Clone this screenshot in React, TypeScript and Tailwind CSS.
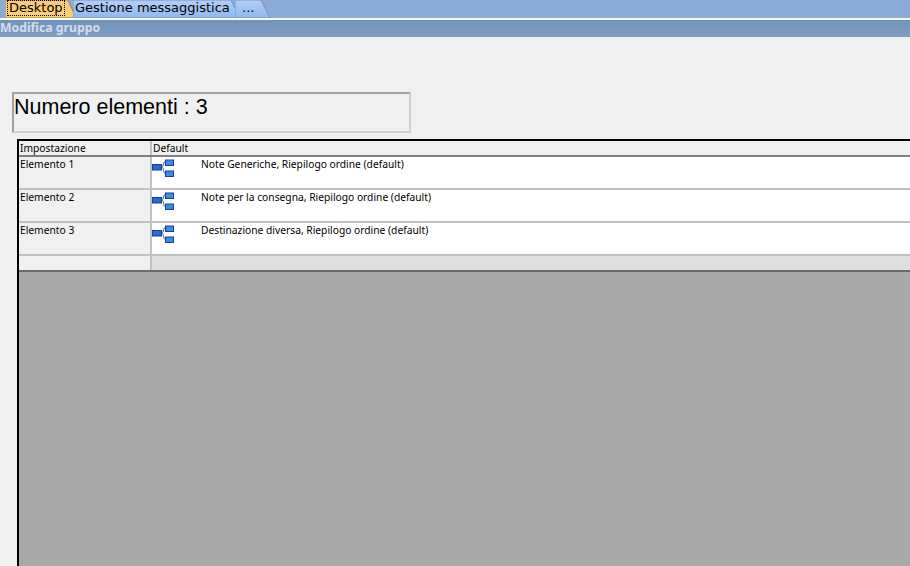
import React from 'react';

const rows = [
  { name: 'Elemento 1', value: 'Note Generiche, Riepilogo ordine (default)' },
  { name: 'Elemento 2', value: 'Note per la consegna, Riepilogo ordine (default)' },
  { name: 'Elemento 3', value: 'Destinazione diversa, Riepilogo ordine (default)' },
];

const TreeIcon: React.FC = () => (
  <svg width="23" height="20" viewBox="0 0 23 20" className="block">
    <path d="M10 8.5 C12.5 8.5 10.5 3.5 13.5 3.5 M10 9.5 C12.5 9.5 10.5 15.5 13.5 15.5" fill="none" stroke="#3b5a8c" strokeWidth="1" />
    <rect x="0.5" y="6.5" width="9" height="5.5" fill="#2a6ad0" stroke="#17408f" />
    <rect x="13.5" y="2" width="8" height="5.5" fill="#3a8ae6" stroke="#17408f" />
    <rect x="13.5" y="13" width="8" height="5.5" fill="#3a8ae6" stroke="#17408f" />
  </svg>
);

const App: React.FC = () => {
  return (
    <div className="h-[566px] w-[910px] overflow-hidden bg-[#f0f0f0] font-['Noto_Sans',sans-serif] text-black">
      {/* Tabs */}
      <div className="flex h-[18px] items-stretch bg-[#8aaad8] pl-[5px] font-['DejaVu_Sans',sans-serif] text-[13px] leading-[16px]">
        <div className="relative w-[72px]">
          <svg width="72" height="18" viewBox="0 0 72 18" className="absolute inset-0">
            <defs>
              <linearGradient id="active" x1="0" y1="0" x2="0" y2="1">
                <stop offset="0" stopColor="#f9c77e" />
                <stop offset="1" stopColor="#fcd06f" />
              </linearGradient>
              <linearGradient id="idle" x1="0" y1="0" x2="0" y2="1">
                <stop offset="0" stopColor="#b4cff5" />
                <stop offset="1" stopColor="#8fb8ee" />
              </linearGradient>
            </defs>
            <path d="M0 18V0H63L71 18Z" fill="url(#active)" stroke="#8f7f60" strokeWidth="1" />
          </svg>
          <span className="absolute left-[2px] top-0 border border-dotted border-black px-[1px] leading-[14px]">Desktop</span>
        </div>
        <div className="relative -ml-[4px] w-[168px]">
          <svg width="168" height="18" viewBox="0 0 168 18" className="absolute inset-0">
            <path d="M0 18V0H158L167 18Z" fill="url(#idle)" stroke="#6f93c8" strokeWidth="1" />
          </svg>
          <span className="absolute left-[2px] top-0 whitespace-nowrap">Gestione messaggistica</span>
        </div>
        <div className="relative -ml-[6px] w-[36px]">
          <svg width="36" height="18" viewBox="0 0 36 18" className="absolute inset-0">
            <path d="M0 18V0H26L35 18Z" fill="url(#idle)" stroke="#6f93c8" strokeWidth="1" />
          </svg>
          <span className="absolute left-[7px] top-0">...</span>
        </div>
      </div>
      <div className="h-[2px] bg-white" />

      {/* Title */}
      <div className="flex h-[17px] items-center bg-gradient-to-b from-[#6f93bb] to-[#7f9fc5] text-[12.25px] font-bold text-[#d4deea]">
        Modifica gruppo
      </div>

      {/* Count box */}
      <div className="ml-[12px] mt-[55px] h-[41px] w-[399px] border-2 border-[#d0d0d0] border-t-[#a0a0a0] border-l-[#a0a0a0] font-['Liberation_Sans',sans-serif] text-[21.5px] leading-[26px]">
        Numero elementi : 3
      </div>

      {/* Grid */}
      <div className="ml-[17px] mt-[6px] h-[427px] border-l-2 border-t-2 border-black bg-[#a9a9a9] text-[10.25px] leading-[14px]">
        <div className="flex h-[16px] border-b-2 border-[#808080] bg-[#f0f0f0]">
          <div className="w-[133px] border-r-2 border-[#c0c0c0] pl-[1px]">Impostazione</div>
          <div className="flex-1 pl-[1px]">Default</div>
        </div>
        {rows.map(row => (
          <div key={row.name} className="flex h-[33px] border-b-2 border-[#c0c0c0]">
            <div className="w-[133px] border-r-2 border-[#c0c0c0] bg-[#f0f0f0] pl-[1px]">{row.name}</div>
            <div className="flex flex-1 bg-white">
              <div className="w-[49px] pt-[1px]">
                <TreeIcon />
              </div>
              <span>{row.value}</span>
            </div>
          </div>
        ))}
        <div className="flex h-[16px] border-b-2 border-[#6a6a6a]">
          <div className="w-[133px] border-r-2 border-[#c0c0c0] bg-[#f0f0f0]" />
          <div className="flex-1 bg-[#dfdfdf]" />
        </div>
      </div>
    </div>
  );
};

export default App;
